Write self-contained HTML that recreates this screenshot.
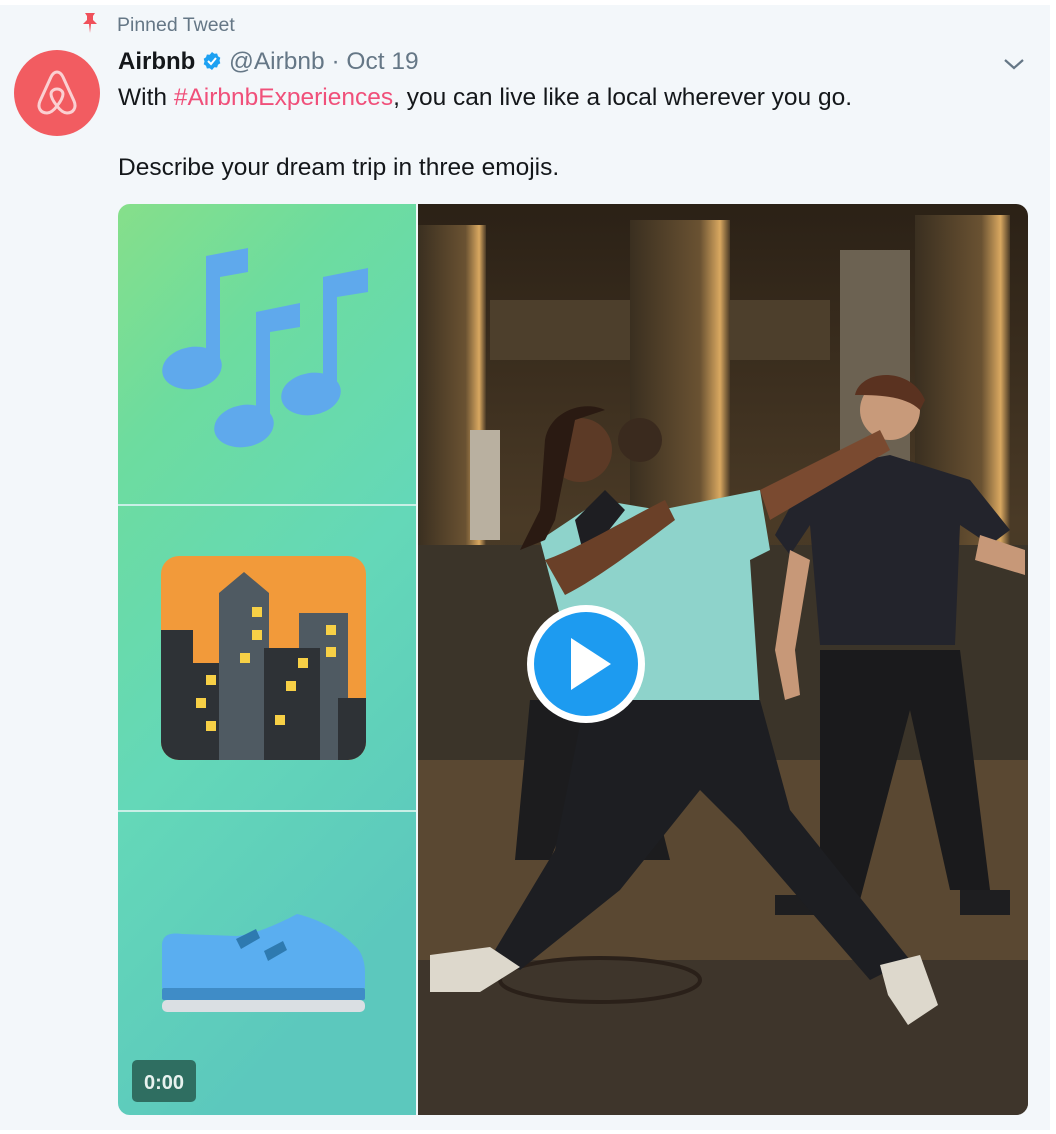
<!DOCTYPE html>
<html><head><meta charset="utf-8"><style>
html,body{margin:0;padding:0;}
body{width:1056px;height:1134px;background:#fff;position:relative;overflow:hidden;font-family:"Liberation Sans",Arial,sans-serif;}
.card{position:absolute;left:0;top:5px;width:1050px;height:1125px;background:#f3f7fa;}
.abs{position:absolute;}
.t{font-size:24.5px;color:#14171a;white-space:nowrap;}
</style></head><body>
<div class="card"></div>
<svg class="abs" style="left:80px;top:12px" width="20" height="22" viewBox="0 0 20 22"><path d="M5 1h10l-2 3v4l4 4H11l-1 9-1-9H3l4-4V4z" fill="#f0505a"/></svg>
<div class="abs" style="left:117px;top:14px;font-size:19.5px;color:#657786">Pinned Tweet</div>
<svg class="abs" style="left:14px;top:50px" width="86" height="86" viewBox="0 0 86 86"><circle cx="43" cy="43" r="43" fill="#f25c61"/><path d="M43 22c-3 0-4.5 2-6 5L26 51c-3 7 1 12 7 12 4 0 7-3 10-7 3 4 6 7 10 7 6 0 10-5 7-12L49 27c-1.5-3-3-5-6-5zM43 56c-4-5-6-9-6-12 0-3 3-5 6-5s6 2 6 5c0 3-2 7-6 12z" fill="none" stroke="#fbd0d2" stroke-width="3" stroke-linejoin="round"/></svg>
<div class="abs t" style="left:118px;top:48px;"><b style="font-size:24px">Airbnb</b> <svg width="20" height="20" viewBox="0 0 20 20" style="vertical-align:-2px"><path d="M10 1l2.3 1.7 2.8-.2.9 2.7 2.3 1.6-.8 2.7.8 2.7-2.3 1.6-.9 2.7-2.8-.2L10 19l-2.3-1.7-2.8.2-.9-2.7-2.3-1.6.8-2.7-.8-2.7 2.3-1.6.9-2.7 2.8.2z" fill="#1da1f2"/><path d="M6 10l3 3 5-6" stroke="#fff" stroke-width="2" fill="none"/></svg> <span style="color:#657786">@Airbnb · Oct 19</span></div>
<svg class="abs" style="left:1003px;top:57px" width="22" height="14" viewBox="0 0 22 14"><path d="M2 3l9 8 9-8" stroke="#657786" stroke-width="2.2" fill="none"/></svg>
<div class="abs t" style="left:118px;top:84px;">With <span style="color:#f0507a">#AirbnbExperiences</span>, you can live like a local wherever you go.</div>
<div class="abs t" style="left:118px;top:154px;">Describe your dream trip in three emojis.</div>

<div class="abs" style="left:118px;top:204px;width:910px;height:911px;border-radius:12px;overflow:hidden;">
<svg class="abs" style="left:0;top:0" width="298" height="911" viewBox="0 0 298 911">
<defs><linearGradient id="g" x1="0" y1="0" x2="0.35" y2="1"><stop offset="0" stop-color="#86df8a"/><stop offset="0.25" stop-color="#6ddc9f"/><stop offset="0.6" stop-color="#64d8b8"/><stop offset="1" stop-color="#5cc8bd"/></linearGradient></defs>
<rect width="298" height="911" fill="url(#g)"/>
<rect y="300" width="298" height="2" fill="#c9efe6"/>
<rect y="606" width="298" height="2" fill="#c9efe6"/>
<g fill="#5fa9ec">
<ellipse cx="74" cy="164" rx="30" ry="21" transform="rotate(-10 74 164)"/><path d="M88 52l42-8v24l-28 5v92h-14z"/>
<ellipse cx="126" cy="222" rx="30" ry="21" transform="rotate(-10 126 222)"/><path d="M138 108l44-9v24l-30 5v94h-14z"/>
<ellipse cx="193" cy="190" rx="30" ry="21" transform="rotate(-10 193 190)"/><path d="M205 73l45-9v24l-31 5v95h-14z"/>
</g>
<rect x="43" y="352" width="205" height="204" rx="18" fill="#f29a3a"/>
<path d="M43 426h32v33h36v97H61a18 18 0 0 1-18-18z" fill="#2e3236"/>
<path d="M101 389l25-21 25 21v167h-50z" fill="#4f5a62"/>
<path d="M181 409h49v147h-49z" fill="#4f5a62"/>
<path d="M146 444h56v112h-56z" fill="#2e3236"/>
<path d="M220 494h28v44a18 18 0 0 1-18 18h-10z" fill="#2e3236"/>
<g fill="#f7d046"><rect x="134" y="403" width="10" height="10"/><rect x="134" y="426" width="10" height="10"/><rect x="122" y="449" width="10" height="10"/><rect x="208" y="421" width="10" height="10"/><rect x="208" y="443" width="10" height="10"/><rect x="180" y="454" width="10" height="10"/><rect x="168" y="477" width="10" height="10"/><rect x="157" y="511" width="10" height="10"/><rect x="88" y="471" width="10" height="10"/><rect x="78" y="494" width="10" height="10"/><rect x="88" y="517" width="10" height="10"/></g>
<path d="M44 742c0-10 6-14 20-12l55 2c20-2 45-14 60-22 22 5 45 18 57 31 10 8 11 22 11 27v16H44z" fill="#5aaef0"/>
<path d="M118 735l20-10 4 9-19 11zM146 747l19-10 4 9-19 11z" fill="#2e7ab0"/>
<rect x="44" y="784" width="203" height="12" rx="2" fill="#3f8cc7"/>
<rect x="44" y="796" width="203" height="12" rx="5" fill="#dadfe3"/>
<rect x="14" y="856" width="64" height="42" rx="5" fill="#2f6e61"/>
<text x="46" y="885" font-family="Liberation Sans,Arial,sans-serif" font-size="20" font-weight="bold" fill="#e8f2ef" text-anchor="middle">0:00</text>
</svg>
<svg class="abs" style="left:300px;top:0" width="610" height="911" viewBox="418 204 610 911">
<defs>
<linearGradient id="bg" x1="0" y1="0" x2="0" y2="1"><stop offset="0" stop-color="#2b2116"/><stop offset="0.35" stop-color="#4a3a26"/><stop offset="0.55" stop-color="#3e3528"/><stop offset="0.62" stop-color="#6a563a"/><stop offset="0.8" stop-color="#5a4832"/><stop offset="1" stop-color="#3a3128"/></linearGradient>
<linearGradient id="pl" x1="0" y1="0" x2="1" y2="0"><stop offset="0" stop-color="#3a2f20"/><stop offset="0.7" stop-color="#6a5232"/><stop offset="0.9" stop-color="#d9a860"/><stop offset="1" stop-color="#4a3a26"/></linearGradient>
</defs>
<rect x="418" y="204" width="610" height="911" fill="url(#bg)"/>
<rect x="490" y="300" width="140" height="60" fill="#4d3f2c"/><rect x="720" y="300" width="110" height="60" fill="#4d3f2c"/>
<rect x="418" y="225" width="68" height="320" fill="url(#pl)"/>
<rect x="630" y="220" width="100" height="330" fill="url(#pl)"/>
<rect x="840" y="250" width="70" height="290" fill="#6c6252"/>
<rect x="915" y="215" width="95" height="340" fill="url(#pl)"/>
<rect x="470" y="430" width="30" height="110" fill="#b9b0a0"/>
<rect x="418" y="545" width="610" height="215" fill="#3b3429"/>
<rect x="418" y="760" width="610" height="200" fill="#5a4832"/>
<rect x="418" y="960" width="610" height="155" fill="#3e352b"/>
<ellipse cx="600" cy="980" rx="100" ry="22" fill="none" stroke="#2a2019" stroke-width="4"/>
<path d="M530 700h100l40 160h-35l-40-110-45 110h-35z" fill="#1c1c1e"/>
<circle cx="640" cy="440" r="22" fill="#3a2a1e"/>
<circle cx="890" cy="410" r="30" fill="#c89a7a"/><path d="M855 395c5-25 55-30 70 5l-5 10c-15-15-45-15-65-15z" fill="#5a3220"/>
<path d="M810 470l80-15 80 25 40 50-20 15-30-20-5 120H820l-10-120-20 30-15-20z" fill="#23242c"/>
<path d="M790 550l-15 100 10 50 15-5-5-45 15-90z" fill="#c79878"/>
<path d="M980 535l45 15v25l-50-15z" fill="#c79878"/>
<path d="M820 650h140l30 240h-40l-40-180-50 190h-40z" fill="#1a1a1c"/>
<path d="M775 895h40v20h-40zM960 890h50v25h-50z" fill="#1e1e20"/>
<path d="M540 540l60-40 60 10 100-20 10 60-20 10 10 150H585z" fill="#8ed3cb"/>
<path d="M575 520l30-30 20 20-40 50z" fill="#1e1e22"/>
<path d="M545 560c30-10 80-40 120-60l10 20c-40 30-80 60-110 75z" fill="#6a4028"/>
<path d="M760 490l120-60 10 20-120 70z" fill="#7a4a30"/>
<circle cx="580" cy="450" r="32" fill="#5c3a26"/><path d="M545 440c5-30 40-40 60-30l-30 10-20 100-10 20-25 10 20-40z" fill="#2a1a12"/>
<path d="M585 700h175l30 110 120 150-40 20-130-150-40-40-80 100-100 80-25-20 60-100z" fill="#1d1e22"/>
<path d="M430 955l60-8 30 20-40 25h-50z" fill="#ddd8cc"/>
<path d="M880 965l40-10 18 50-30 20-20-30z" fill="#ddd8cc"/>
<circle cx="586" cy="664" r="59" fill="#fff"/><circle cx="586" cy="664" r="52" fill="#1d9bf0"/>
<path d="M571 638v52l40-26z" fill="#fff"/>
</svg>
</div>
</body></html>
